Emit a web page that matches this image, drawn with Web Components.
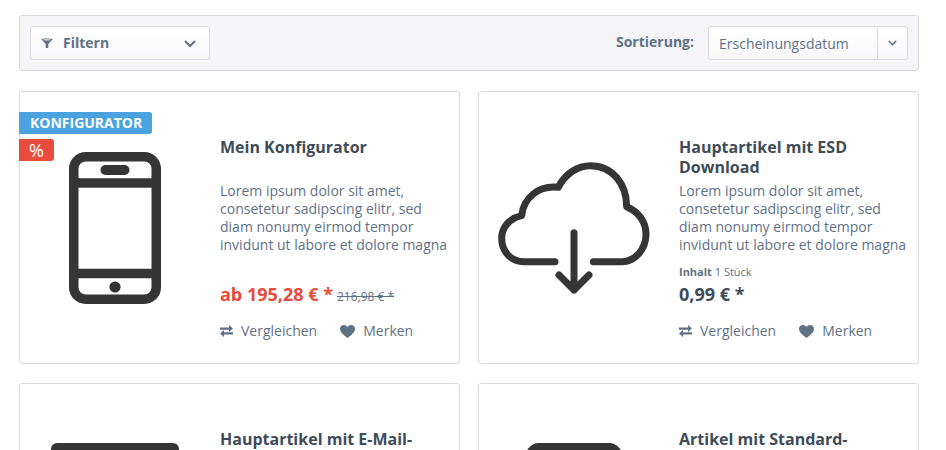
<!DOCTYPE html>
<html lang="de">
<head>
<meta charset="utf-8">
<title>Listing</title>
<style>
    html, body { margin: 0; height: 450px; overflow: hidden; background: #fff; }
    body { font-family: "Open Sans", sans-serif; color: #5f7285; }
    svg { display: block; }
</style>
</head>
<body>
<listing-page>
    <listing-toolbar slot="toolbar"></listing-toolbar>

    <product-card title-text="Mein Konfigurator" title-pad>
        <svg slot="image" width="92" height="152" viewBox="0 0 92 152" fill="none" stroke="#353535" stroke-width="9.500">
            <rect x="4.750" y="4.750" width="82.500" height="142.500" rx="12"/>
            <path d="M5 31h82M5 121.500h82"/>
            <rect x="31.500" y="13" width="29" height="10" rx="5" fill="#353535" stroke="none"/>
            <circle cx="46" cy="135" r="5.600" fill="#353535" stroke="none"/>
        </svg>
        <product-badge slot="badges" color="#4aa3df">KONFIGURATOR</product-badge>
        <product-badge slot="badges" color="#e74c3c" large>%</product-badge>
        <span slot="desc">Lorem ipsum dolor sit amet, consetetur sadipscing elitr, sed diam nonumy eirmod tempor invidunt ut labore et dolore magna</span>
        <product-price slot="price" value="ab 195,28 € *" old="216,98 € *" discount></product-price>
    </product-card>

    <product-card title-text="Hauptartikel mit ESD Download">
        <svg slot="image" width="152" height="132" viewBox="24 36 456 396" style="margin-top:10px" fill="none" stroke="#353535" stroke-width="21" stroke-linecap="round" stroke-linejoin="round">
            <path d="M195 335H100C62 335 35 303 35 265C35 232 58 205 95 197C100 145 145 105 205 112C225 72 262 47 302 47C365 47 410 100 410 170C445 185 468 215 468 252C468 298 435 335 395 335H310"/>
            <path d="M252 248V420M207 375L252 420L297 375"/>
        </svg>
        <span slot="desc">Lorem ipsum dolor sit amet, consetetur sadipscing elitr, sed diam nonumy eirmod tempor invidunt ut labore et dolore magna</span>
        <span slot="unit"><b>Inhalt</b> 1 Stück</span>
        <product-price slot="price" value="0,99 € *"></product-price>
    </product-card>

    <product-card title-text="Hauptartikel mit E-Mail-" title-pad partial>
        <svg slot="image" width="128" height="153" viewBox="0 0 128 153" style="margin:-1px 0 0 -1px"><rect width="128" height="153" rx="6" fill="#353535"/></svg>
    </product-card>

    <product-card title-text="Artikel mit Standard-" title-pad partial>
        <svg slot="image" width="98" height="153" viewBox="0 0 98 153" style="margin-top:-1px" fill="#353535"><path d="M0 153V14C0 7 7 0 13 0H85C91 0 98 7 98 14V153Z"/></svg>
    </product-card>
</listing-page>

<script>
class ListingPage extends HTMLElement {
    constructor() {
        super();
        this.attachShadow({mode: "open"}).innerHTML = `
            <style>
                :host { display: block; padding: 15px 27px 0 19px; }
                .grid {
                    display: grid;
                    grid-template-columns: 441px 441px;
                    column-gap: 18px;
                    row-gap: 19px;
                    margin-top: 20px;
                }
            </style>
            <slot name="toolbar"></slot>
            <div class="grid"><slot></slot></div>
        `;
    }
}

class ListingToolbar extends HTMLElement {
    constructor() {
        super();
        this.attachShadow({mode: "open"}).innerHTML = `
            <style>
                :host {
                    display: flex;
                    align-items: center;
                    justify-content: space-between;
                    box-sizing: border-box;
                    height: 56px;
                    padding: 0 10px;
                    background: #f5f5f8;
                    border: 1px solid #dadae5;
                    border-radius: 3px;
                }
                .btn, .select {
                    box-sizing: border-box;
                    height: 34px;
                    display: flex;
                    align-items: center;
                    border: 1px solid #dadae5;
                    border-radius: 3px;
                    background: linear-gradient(#fff, #f8f8fa);
                }
                .btn {
                    width: 180px;
                    padding: 0 13px 2px 10px;
                    font-size: 14px;
                    font-weight: 700;
                }
                .btn .label { flex: 1; margin-left: 10px; }
                .btn svg { margin-top: 3px; }
                .sort { display: flex; align-items: center; }
                .sort .label { font-size: 14px; font-weight: 700; margin: -3px 14px 0 0; }
                .select { width: 200px; font-size: 14px; }
                .select .value { flex: 1; padding-left: 10px; }
                .select .arrow {
                    width: 29px;
                    height: 100%;
                    display: flex;
                    align-items: center;
                    justify-content: center;
                    border-left: 1px solid #dadae5;
                }
                svg { display: block; }
            </style>
            <div class="btn">
                <svg width="12" height="11" viewBox="0 0 12 11">
                    <path d="M.5 1.500C.5.300 11.500.300 11.500 1.500L7.300 6V10H4.700V6Z" fill="#5f7285"/>
                    <ellipse cx="6" cy="1.700" rx="4" ry=".7" fill="#c9d0d8"/>
                </svg>
                <span class="label">Filtern</span>
                <svg width="12" height="8" viewBox="0 0 12 8" fill="none" stroke="#5f7285" stroke-width="2"><path d="M1 1l5 5 5-5"/></svg>
            </div>
            <div class="sort">
                <span class="label">Sortierung:</span>
                <div class="select">
                    <span class="value">Erscheinungsdatum</span>
                    <span class="arrow">
                        <svg width="9" height="6" viewBox="0 0 9 6" fill="none" stroke="#5f7285" stroke-width="1.500"><path d="M.8 1l3.700 3.700L8.200 1"/></svg>
                    </span>
                </div>
            </div>
        `;
    }
}

class ProductBadge extends HTMLElement {
    constructor() {
        super();
        this.attachShadow({mode: "open"}).innerHTML = `
            <style>
                :host {
                    display: block;
                    height: 22px;
                    line-height: 22px;
                    padding: 0 10px 0 11px;
                    background: var(--badge-color);
                    color: #fff;
                    font-size: 14px;
                    font-weight: 700;
                    border-radius: 0 3px 3px 0;
                }
                :host([large]) { font-size: 18px; font-weight: 400; padding: 0 10px; }
            </style>
            <slot></slot>
        `;
    }
    connectedCallback() {
        this.style.setProperty("--badge-color", this.getAttribute("color"));
    }
}

class ProductPrice extends HTMLElement {
    constructor() {
        super();
        this.attachShadow({mode: "open"});
    }
    connectedCallback() {
        const old = this.getAttribute("old");
        this.shadowRoot.innerHTML = `
            <style>
                :host { display: flex; align-items: baseline; height: 26px; line-height: 26px; }
                .value { font-size: 18px; font-weight: 700; color: #3f4c58; }
                :host([discount]) .value { color: #e74c3c; }
                .old { font-size: 12px; margin-left: 4px; color: #5f7285; text-decoration: line-through; }
            </style>
            <span class="value">${this.getAttribute("value")}</span>
            ${old ? `<span class="old">${old}</span>` : ""}
        `;
    }
}

class ProductActions extends HTMLElement {
    constructor() {
        super();
        this.attachShadow({mode: "open"}).innerHTML = `
            <style>
                :host { display: flex; align-items: center; font-size: 14px; height: 20px; line-height: 20px; }
                .action { display: flex; align-items: center; }
                .action + .action { margin-left: 23px; }
                svg { display: block; margin-right: 8px; }
            </style>
            <span class="action">
                <svg width="13" height="12" viewBox="0 0 13 12" fill="#5f7285">
                    <path d="M0 2.500h9V0l4 3.500L9 7V4.700H0z"/>
                    <path d="M13 7.300H4V5L0 8.500 4 12V9.500h9z"/>
                </svg>
                Vergleichen
            </span>
            <span class="action">
                <svg width="15" height="13" viewBox="0 0 15 13" fill="#5f7285">
                    <path d="M7.500 13C5 10.800 0 7.500 0 3.900 0 1.500 1.800 0 3.900 0c1.500 0 2.800.8 3.600 2.100C8.300.8 9.600 0 11.100 0 13.200 0 15 1.500 15 3.900c0 3.600-5 6.900-7.500 9.100z"/>
                </svg>
                Merken
            </span>
        `;
    }
}

class ProductCard extends HTMLElement {
    constructor() {
        super();
        this.attachShadow({mode: "open"});
    }
    connectedCallback() {
        // the lower row is cut by the window, only title and picture are in frame
        const partial = this.hasAttribute("partial");
        this.shadowRoot.innerHTML = `
            <style>
                :host {
                    display: block;
                    position: relative;
                    box-sizing: border-box;
                    height: 273px;
                    background: #fff;
                    border: 1px solid #dadae5;
                    border-radius: 3px;
                }
                .badges {
                    position: absolute;
                    left: -1px;
                    top: 20px;
                    display: flex;
                    flex-direction: column;
                    align-items: flex-start;
                    gap: 5px;
                }
                .body { display: flex; height: 100%; }
                .image {
                    width: 200px;
                    flex: none;
                    padding: 60px 10px 0 0;
                    display: flex;
                    justify-content: center;
                    align-items: flex-start;
                    box-sizing: border-box;
                }
                .info {
                    flex: 1;
                    display: flex;
                    flex-direction: column;
                    padding-top: 45px;
                    padding-right: 11px;
                }
                h3 {
                    margin: 0;
                    font-size: 16px;
                    line-height: 20px;
                    font-weight: 700;
                    color: #3f4c58;
                }
                .desc { font-size: 14px; line-height: 18px; margin-top: 5px; height: 72px; }
                :host([title-pad]) .desc { margin-top: 25px; }
                .unit { font-size: 11px; line-height: 16px; margin-top: 10px; height: 16px; }
                :host([title-pad]) .unit { display: none; }
                ::slotted([slot="unit"]) { display: block; }
                .price { margin-top: 1px; }
                :host([title-pad]) .price { margin-top: 27px; }
                product-actions { margin-top: 14px; }
            </style>
            <div class="badges"><slot name="badges"></slot></div>
            <div class="body">
                <div class="image"><slot name="image"></slot></div>
                <div class="info">
                    <h3>${this.getAttribute("title-text")}</h3>
                    ${partial ? "" : `
                    <div class="desc"><slot name="desc"></slot></div>
                    <div class="unit"><slot name="unit"></slot></div>
                    <div class="price"><slot name="price"></slot></div>
                    <product-actions></product-actions>`}
                </div>
            </div>
        `;
    }
}

customElements.define("listing-page", ListingPage);
customElements.define("listing-toolbar", ListingToolbar);
customElements.define("product-badge", ProductBadge);
customElements.define("product-price", ProductPrice);
customElements.define("product-actions", ProductActions);
customElements.define("product-card", ProductCard);
</script>
</body>
</html>
